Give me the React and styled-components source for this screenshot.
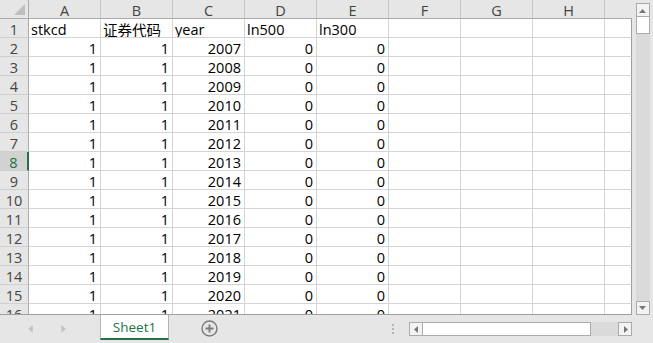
import React from "react";
import styled, { createGlobalStyle } from "styled-components";

const GlobalStyle = createGlobalStyle`
  html, body { margin: 0; padding: 0; }
  body {
    width: 653px; height: 343px; overflow: hidden; background: #fff;
    font-family: "Open Sans", "Noto Sans CJK SC", sans-serif;
  }
`;

const Window = styled.div`
  width: 653px; height: 343px; display: flex; flex-direction: column;
  background: #e6e6e6; overflow: hidden;
`;
const Main = styled.div`display: flex; height: 315px;`;
const Sheet = styled.div`
  width: 632px; height: 315px; box-sizing: border-box;
  border-bottom: 1px solid #9f9f9f; overflow: hidden; background: #fff;
`;
const Grid = styled.div`
  display: grid;
  grid-template-columns: 29px repeat(8, 72px) 27px;
  grid-auto-rows: 19px;
`;
const Corner = styled.div`
  background: #e6e6e6; box-sizing: border-box;
  border-right: 1px solid #ababab; border-bottom: 1px solid #ababab;
  display: flex; align-items: flex-end; justify-content: flex-end;
  padding: 0 3px 3px 0;
`;
const ColHead = styled.div`
  background: #e6e6e6; box-sizing: border-box; color: #444;
  border-bottom: 1px solid #ababab;
  border-right: ${p => (p.$last ? "none" : "1px solid #c6c6c6")};
  font-size: 14.5px; display: flex; align-items: center; justify-content: center;
  padding-top: 3px;
`;
const RowHead = styled.div`
  background: ${p => (p.$active ? "#d2d2d2" : "#e6e6e6")};
  color: ${p => (p.$active ? "#217346" : "#444")};
  box-sizing: border-box;
  border-right: ${p => (p.$active ? "2px solid #217346" : "1px solid #ababab")};
  border-bottom: 1px solid #cfcfcf;
  font-size: 14.5px; display: flex; align-items: center; justify-content: center;
  padding-top: 2px;
`;
const Cell = styled.div`
  box-sizing: border-box; color: #000; white-space: nowrap; overflow: hidden;
  border-right: 1px solid ${p => (p.$last ? "#9f9f9f" : "#d4d4d4")};
  border-bottom: 1px solid #d4d4d4;
  font-size: 14.5px; display: flex; align-items: center;
  justify-content: ${p => (p.$num ? "flex-end" : "flex-start")};
  padding: 2px 3px 0 2px;
`;

const VScroll = styled.div`
  width: 21px; display: flex; flex-direction: column; align-items: center;
  padding-top: 3px; box-sizing: border-box;
`;
const ScrollBtn = styled.div`
  width: 14px; height: 14px; flex: none; box-sizing: border-box;
  border: 1px solid #ababab; background: #f3f3f3;
  display: flex; align-items: center; justify-content: center;
`;
const VThumb = styled.div`
  width: 14px; height: 17px; flex: none; box-sizing: border-box;
  border: 1px solid #ababab; border-top: none; background: #fff;
`;
const VTrack = styled.div`width: 14px; flex: 1; background: #dadada;`;

const BottomBar = styled.div`
  height: 28px; display: flex; align-items: flex-start;
`;
const NavArea = styled.div`
  width: 100px; height: 28px; display: flex; align-items: center;
  padding-left: 27px; gap: 24px; box-sizing: border-box;
`;
const Tab = styled.div`
  width: 69px; height: 25px; box-sizing: border-box; background: #fff;
  border-left: 1px solid #b4b4b4; border-right: 1px solid #b4b4b4;
  border-bottom: 2px solid #217346; color: #217346; font-size: 13.5px;
  display: flex; align-items: center; justify-content: center; padding-top: 1px;
`;
const AddBtn = styled.div`
  margin-left: 32px; margin-top: 5px; width: 17px; height: 17px;
  display: flex;
`;
const Spacer = styled.div`flex: 1;`;
const Dots = styled.div`
  margin-top: 9px; display: flex; flex-direction: column; gap: 2px;
  margin-right: 15px;
`;
const Dot = styled.div`width: 2px; height: 2px; background: #b5b5b5;`;
const HScroll = styled.div`
  width: 223px; height: 14px; margin-top: 7px; margin-right: 21px;
  display: flex;
`;
const HThumb = styled.div`
  width: 168px; height: 14px; box-sizing: border-box; background: #fff;
  border: 1px solid #ababab; border-left: none;
`;
const HTrack = styled.div`flex: 1; background: #dadada;`;

const Tri = ({ dir, color = "#777", size = 7 }) => {
  const pts = {
    up: "0,6 7,6 3.5,2",
    down: "0,1 7,1 3.5,5",
    left: "5,0 5,7 1,3.5",
    right: "2,0 2,7 6,3.5",
  }[dir];
  return (
    <svg width={size} height={size} viewBox="0 0 7 7">
      <polygon points={pts} fill={color} />
    </svg>
  );
};

const cols = ["A", "B", "C", "D", "E", "F", "G", "H", ""];
const header = ["stkcd", "证券代码", "year", "ln500", "ln300", "", "", "", ""];

export default function App() {
  const rows = [{ n: 1, vals: header, num: false }];
  for (let i = 0; i < 15; i++) {
    rows.push({ n: i + 2, vals: ["1", "1", String(2007 + i), "0", "0", "", "", "", ""], num: true });
  }
  return (
    <>
      <GlobalStyle />
      <Window>
        <Main>
          <Sheet>
            <Grid>
              <Corner>
                <svg width="11" height="11" viewBox="0 0 11 11">
                  <polygon points="11,0 11,11 0,11" fill="#bfbfbf" />
                </svg>
              </Corner>
              {cols.map((c, i) => (
                <ColHead key={i} $last={i === cols.length - 1}>{c}</ColHead>
              ))}
              {rows.map(r => (
                <React.Fragment key={r.n}>
                  <RowHead $active={r.n === 8}>{r.n}</RowHead>
                  {r.vals.map((v, j) => (
                    <Cell key={j} $num={r.num} $last={j === r.vals.length - 1}>{v}</Cell>
                  ))}
                </React.Fragment>
              ))}
            </Grid>
          </Sheet>
          <VScroll>
            <ScrollBtn><Tri dir="up" /></ScrollBtn>
            <VThumb />
            <VTrack />
            <ScrollBtn><Tri dir="down" /></ScrollBtn>
          </VScroll>
        </Main>
        <BottomBar>
          <NavArea>
            <Tri dir="left" color="#c3c3c3" size={8} />
            <Tri dir="right" color="#c3c3c3" size={8} />
          </NavArea>
          <Tab>Sheet1</Tab>
          <AddBtn>
            <svg width="17" height="17" viewBox="0 0 17 17">
              <circle cx="8.5" cy="8.5" r="7.5" fill="none" stroke="#7b7b7b" strokeWidth="1.4" />
              <path d="M8.5 4.5v8M4.5 8.5h8" stroke="#7b7b7b" strokeWidth="1.8" />
            </svg>
          </AddBtn>
          <Spacer />
          <Dots><Dot /><Dot /><Dot /></Dots>
          <HScroll>
            <ScrollBtn><Tri dir="left" /></ScrollBtn>
            <HThumb />
            <HTrack />
            <ScrollBtn><Tri dir="right" /></ScrollBtn>
          </HScroll>
        </BottomBar>
      </Window>
    </>
  );
}
